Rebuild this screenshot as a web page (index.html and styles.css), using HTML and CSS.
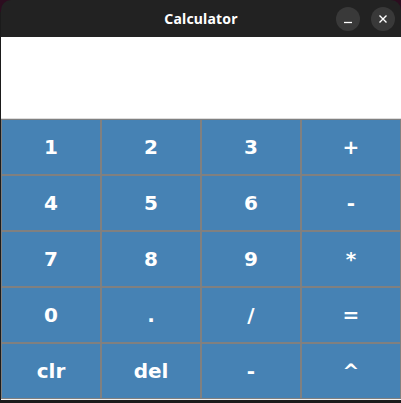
FILE: index.html
```html
<!DOCTYPE html>
<html>
<head>
<meta charset="utf-8">
<link rel="stylesheet" href="styles.css">
</head>
<body>
<div class="window">
  <div class="titlebar">
    <span class="title">Calculator</span>
    <div class="controls">
      <span class="ctl"><svg width="10" height="10" viewBox="0 0 10 10"><path d="M1 8.5H9" stroke="#fff" stroke-width="1.3"/></svg></span>
      <span class="ctl"><svg width="10" height="10" viewBox="0 0 10 10"><path d="M1.5 1.5L8.5 8.5M8.5 1.5L1.5 8.5" stroke="#fff" stroke-width="1.4"/></svg></span>
    </div>
  </div>
  <div class="display"></div>
  <div class="keys">
    <button class="key">1</button><button class="key">2</button><button class="key">3</button><button class="key">+</button>
    <button class="key">4</button><button class="key">5</button><button class="key">6</button><button class="key">-</button>
    <button class="key">7</button><button class="key">8</button><button class="key">9</button><button class="key">*</button>
    <button class="key">0</button><button class="key">.</button><button class="key">/</button><button class="key">=</button>
    <button class="key">clr</button><button class="key">del</button><button class="key">-</button><button class="key">^</button>
  </div>
  <div class="bottom"></div>
</div>
</body>
</html>
```
FILE: styles.css
```css
html, body {
  margin: 0;
  padding: 0;
  background: #1b1b1b;
  width: 401px;
  height: 403px;
  overflow: hidden;
}
body {
  background: linear-gradient(#2c0d1f 0, #2c0d1f 12px, #1b1b1b 12px);
}
.window {
  margin-left: 1px;
  width: 400px;
  display: flex;
  flex-direction: column;
}
.titlebar {
  height: 37px;
  background: #222222;
  border-radius: 10px 10px 0 0;
  display: flex;
  align-items: center;
  justify-content: center;
  position: relative;
}
.title {
  color: #ffffff;
  font-family: "Noto Sans", sans-serif;
  font-weight: bold;
  font-size: 14px;
  letter-spacing: 0.2px;
}
.controls {
  position: absolute;
  right: 6px;
  top: 7px;
  display: flex;
  gap: 11px;
}
.ctl {
  width: 24px;
  height: 24px;
  border-radius: 50%;
  background: #393939;
  display: flex;
  align-items: center;
  justify-content: center;
}
.display {
  height: 81px;
  background: #ffffff;
  border-bottom: 1px solid #dcdcdc;
}
.keys {
  display: grid;
  grid-template-columns: repeat(4, 100px);
  grid-auto-rows: 56px;
}
.key {
  margin: 0;
  padding: 0;
  background: #4682b4;
  border: 1px solid #808080;
  color: #ffffff;
  font-family: "DejaVu Sans", sans-serif;
  font-weight: bold;
  font-size: 20px;
  line-height: 1;
}
.bottom {
  height: 1px;
  background: #f2f2f2;
}
```
